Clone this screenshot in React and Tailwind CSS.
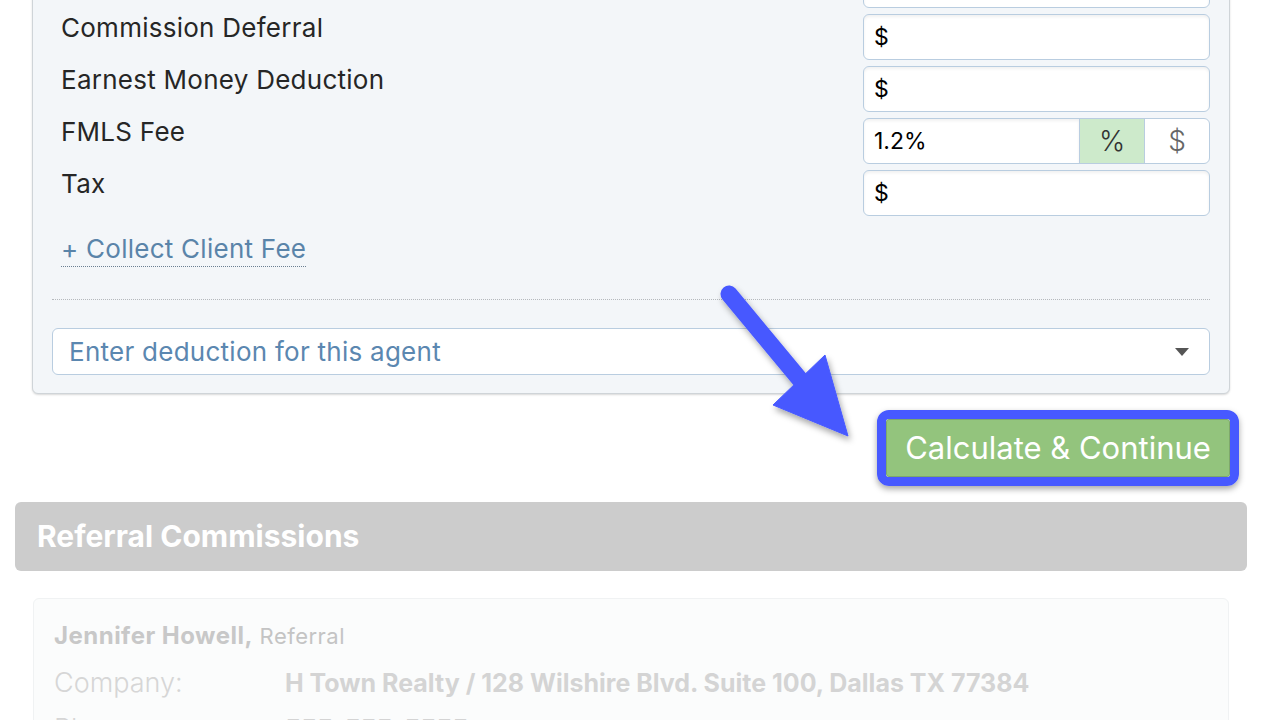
import React from 'react';

const font = { fontFamily: 'Inter, "Noto Sans", sans-serif' };

// first row sits above the visible area (page is scrolled)
const rows = [
  { label: '', value: '' },
  { label: 'Commission Deferral', value: '$' },
  { label: 'Earnest Money Deduction', value: '$' },
  { label: 'FMLS Fee', value: '1.2%', toggle: true },
  { label: 'Tax', value: '$' },
];

const DeductionRow = ({ row }) => (
  <div className="flex items-start justify-between">
    <span className="pl-[9px] text-[26px] leading-[28px] tracking-[0.01em] text-[#262626]">{row.label}</span>
    {row.toggle ? (
      <div className="flex h-[46px] w-[347px] overflow-hidden rounded-[6px] border border-[#b9cde0] bg-white">
        <div className="flex flex-1 items-center pl-[10px] text-[23px] text-black shadow-[inset_0_2px_3px_rgba(0,0,0,0.06)]">
          {row.value}
        </div>
        <div className="flex w-[65px] items-center justify-center border-l border-[#b9cde0] bg-[#cdeacb] text-[28px] font-light text-[#333]">
          %
        </div>
        <div className="flex w-[65px] items-center justify-center border-l border-[#b9cde0] text-[28px] font-light text-[#666]">
          $
        </div>
      </div>
    ) : (
      <div className="flex h-[46px] w-[347px] items-center rounded-[6px] border border-[#b9cde0] bg-white pl-[10px] text-[23px] text-black shadow-[inset_0_2px_3px_rgba(0,0,0,0.06)]">
        {row.value}
      </div>
    )}
  </div>
);

const App = () => {
  return (
    <div className="relative h-[720px] w-[1269px] overflow-hidden bg-white" style={font}>
      <div className="pl-[15px] pr-[22px]">
        {/* Deductions card, scrolled so its top is out of view */}
        <div className="mx-[17px] -mt-[39px] rounded-b-[6px] border border-[#cfd4d8] bg-[#f3f6f9] px-[19px] pb-[18px] shadow-[0_1px_2px_rgba(0,0,0,0.15)]">
          <div className="flex flex-col gap-[6px]">
            {rows.map((row, i) => (
              <DeductionRow key={i} row={row} />
            ))}
          </div>
          <div className="mt-[16px] pl-[9px]">
            <span className="inline-block border-b border-dotted border-[#6b7f92] text-[26px] leading-[34px] tracking-[0.01em] text-[#5a84a9]">
              + Collect Client Fee
            </span>
          </div>
          <div className="mt-[32px] border-t border-dotted border-[#b5b9bd]" />
          <div className="mt-[28px] flex h-[47px] items-center justify-between rounded-[6px] border border-[#b9cde0] bg-white pl-[16px] pr-[20px]">
            <span className="text-[26px] tracking-[0.01em] text-[#5b87b0]">Enter deduction for this agent</span>
            <span className="h-0 w-0 border-x-[7px] border-t-[8px] border-x-transparent border-t-[#555]" />
          </div>
        </div>

        <div className="mt-[16px] flex justify-end pr-[8px]">
          <div className="rounded-[12px] border-[9px] border-[#4759ff] shadow-[0_3px_6px_rgba(0,0,0,0.35)]">
            <button className="flex h-[58px] w-[344px] items-center justify-center rounded-[3px] border border-[#7ea86b] bg-[#93c47d] text-[31px] text-white">
              Calculate &amp; Continue
            </button>
          </div>
        </div>

        <div className="mt-[16px] flex h-[69px] items-center rounded-[6px] bg-[#cccccc] px-[22px]">
          <h2 className="text-[30px] font-bold text-white">Referral Commissions</h2>
        </div>

        <div className="mx-[18px] mt-[27px] rounded-[6px] border border-[#f0f2f3] bg-[#fbfcfc] px-[20px] pt-[20px]">
          <div className="text-[24px] leading-[34px] tracking-[0.02em]">
            <span className="font-bold text-[#c8c8c8]">Jennifer Howell,</span>
            <span className="text-[22px] text-[#c4c4c4]"> Referral</span>
          </div>
          <div className="mt-[12px] grid grid-cols-[231px_1fr] gap-y-[10px] text-[25px] leading-[36px]">
            <span className="text-[27px] font-light text-[#d6d6d6]">Company:</span>
            <span className="font-bold text-[#d4d4d4]">H Town Realty / 128 Wilshire Blvd. Suite 100, Dallas TX 77384</span>
            <span className="text-[27px] font-light text-[#d6d6d6]">Phone:</span>
            <span className="font-bold text-[#d4d4d4]">555-555-5555</span>
          </div>
        </div>
      </div>

      {/* annotation arrow */}
      <svg className="pointer-events-none absolute left-0 top-0" width="1269" height="720">
        <defs>
          <filter id="sh" x="-20%" y="-20%" width="140%" height="140%">
            <feDropShadow dx="2" dy="4" stdDeviation="3" floodColor="#000" floodOpacity="0.35" />
          </filter>
        </defs>
        <g filter="url(#sh)" fill="#4759ff" stroke="#4759ff">
          <line x1="729" y1="294" x2="802" y2="382" strokeWidth="17" strokeLinecap="round" />
          <polygon points="773,405 848,436 825,355" strokeWidth="1" strokeLinejoin="round" />
        </g>
      </svg>
    </div>
  );
};

export default App;
